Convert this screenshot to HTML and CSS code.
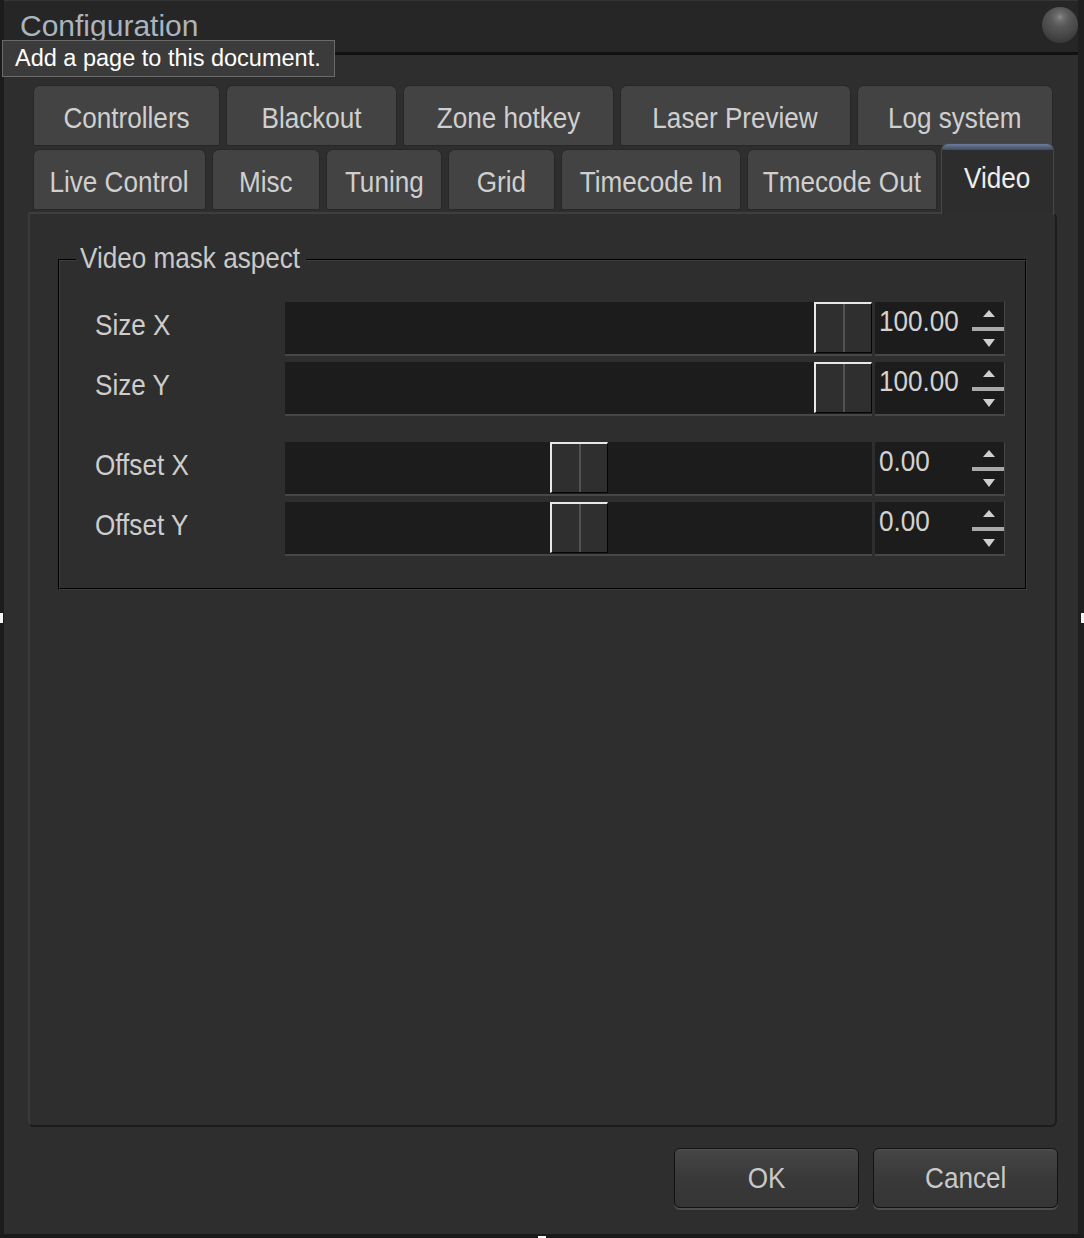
FILE: index.html
```html
<!DOCTYPE html>
<html>
<head>
<meta charset="utf-8">
<title>Configuration</title>
<link rel="stylesheet" href="styles.css">
</head>
<body>
<div class="window">
  <div class="titlebar">
    <span class="title">Configuration</span>
    <span class="knob"></span>
  </div>
  <div class="tooltip">Add a page to this document.</div>

  <div class="tabs">
    <div class="tabrow row1">
      <div class="tab"><span class="t">Controllers</span></div>
      <div class="tab"><span class="t">Blackout</span></div>
      <div class="tab"><span class="t">Zone hotkey</span></div>
      <div class="tab"><span class="t">Laser Preview</span></div>
      <div class="tab"><span class="t">Log system</span></div>
    </div>
    <div class="tabrow row2">
      <div class="tab"><span class="t">Live Control</span></div>
      <div class="tab"><span class="t">Misc</span></div>
      <div class="tab"><span class="t">Tuning</span></div>
      <div class="tab"><span class="t">Grid</span></div>
      <div class="tab"><span class="t">Timecode In</span></div>
      <div class="tab"><span class="t">Tmecode Out</span></div>
      <div class="tab active"><span class="t">Video</span></div>
    </div>
  </div>

  <div class="pane">
    <fieldset class="group">
      <legend><span class="t">Video mask aspect</span></legend>
      <div class="ctl">
        <span class="lbl"><span class="t">Size X</span></span>
        <div class="slider"><span class="thumb" style="--pos:1"></span></div>
        <div class="spin"><span class="val"><span class="t">100.00</span></span>
          <svg class="arrows" width="33" height="52" viewBox="0 0 33 52"><path d="M12 15h12l-6-7z" fill="#cfcfcf"/><rect x="1" y="25" width="32" height="4" fill="#a9a9a9"/><path d="M12 37h12l-6 8z" fill="#cfcfcf"/></svg>
        </div>
      </div>
      <div class="ctl">
        <span class="lbl"><span class="t">Size Y</span></span>
        <div class="slider"><span class="thumb" style="--pos:1"></span></div>
        <div class="spin"><span class="val"><span class="t">100.00</span></span>
          <svg class="arrows" width="33" height="52" viewBox="0 0 33 52"><path d="M12 15h12l-6-7z" fill="#cfcfcf"/><rect x="1" y="25" width="32" height="4" fill="#a9a9a9"/><path d="M12 37h12l-6 8z" fill="#cfcfcf"/></svg>
        </div>
      </div>
      <div class="ctl sep">
        <span class="lbl"><span class="t">Offset X</span></span>
        <div class="slider"><span class="thumb" style="--pos:0.5"></span></div>
        <div class="spin"><span class="val"><span class="t">0.00</span></span>
          <svg class="arrows" width="33" height="52" viewBox="0 0 33 52"><path d="M12 15h12l-6-7z" fill="#cfcfcf"/><rect x="1" y="25" width="32" height="4" fill="#a9a9a9"/><path d="M12 37h12l-6 8z" fill="#cfcfcf"/></svg>
        </div>
      </div>
      <div class="ctl">
        <span class="lbl"><span class="t">Offset Y</span></span>
        <div class="slider"><span class="thumb" style="--pos:0.5"></span></div>
        <div class="spin"><span class="val"><span class="t">0.00</span></span>
          <svg class="arrows" width="33" height="52" viewBox="0 0 33 52"><path d="M12 15h12l-6-7z" fill="#cfcfcf"/><rect x="1" y="25" width="32" height="4" fill="#a9a9a9"/><path d="M12 37h12l-6 8z" fill="#cfcfcf"/></svg>
        </div>
      </div>
    </fieldset>
  </div>

  <div class="buttons">
    <button class="btn"><span class="t">OK</span></button>
    <button class="btn"><span class="t">Cancel</span></button>
  </div>

  <span class="grip grip-l"></span>
  <span class="grip grip-r"></span>
  <span class="grip grip-b"></span>
</div>
</body>
</html>
```

FILE: styles.css
```css
* { box-sizing: border-box; }
html, body { margin: 0; padding: 0; background: #2e2e2e; }
body { width: 1084px; height: 1238px; overflow: hidden; }

.window {
  position: relative;
  width: 1084px;
  height: 1238px;
  background: #2e2e2e;
  border-left: 4px solid #1c1c1c;
  border-right: 6px solid #1f1f1f;
  border-bottom: 4px solid #1a1a1a;
  display: flex;
  flex-direction: column;
  font-family: "Liberation Sans", Arial, sans-serif;
  color: #cecece;
}

/* condensed UI text */
.t {
  display: inline-block;
  transform: scaleX(0.87);
  white-space: nowrap;
}

/* title bar */
.titlebar {
  flex: none;
  height: 55px;
  display: flex;
  align-items: flex-start;
  background: #262626;
  border-top: 1px solid #353535;
  border-bottom: 3px solid #121212;
}
.title {
  font-size: 30px;
  line-height: 34px;
  color: #aab4be;
  padding: 8px 0 0 16px;
}
.knob {
  margin: 6px 0 0 auto;
  width: 36px;
  height: 36px;
  border-radius: 50%;
  background: radial-gradient(circle at 50% 28%, #8a8a8a 0, #6e6e6e 12%, #585858 30%, #4a4a4a 55%, #3b3b3b 78%, #2c2c2c 100%);
}

.tooltip {
  position: absolute;
  left: -2px;
  top: 40px;
  width: 333px;
  height: 37px;
  z-index: 5;
  background: #3b3b3b;
  border: 1px solid #6a6a6a;
  font-size: 23.5px;
  line-height: 35px;
  color: #ffffff;
  padding-left: 12px;
  white-space: nowrap;
}

/* tabs */
.tabs { flex: none; padding-top: 30px; }
.tabrow { display: flex; gap: 6px; padding-left: 29px; }
.tab {
  flex: none;
  display: flex;
  align-items: center;
  justify-content: center;
  height: 61px;
  padding-top: 5px;
  background: #434343;
  border: 1px solid #272727;
  border-radius: 7px 7px 2px 2px;
  font-size: 30px;
  color: #cfcfcf;
  white-space: nowrap;
}
.row2 { height: 71px; align-items: flex-end; margin-top: -3px; }
.row2 .tab { margin-bottom: 4px; }
.row2 .tab.active {
  position: relative;
  z-index: 2;
  height: 71px;
  margin-bottom: 0;
  margin-left: -2px;
  padding: 0 0 3px 0;
  border: 1px solid #484848;
  border-bottom: none;
  border-radius: 7px 7px 0 0;
  background: linear-gradient(#6d7c9c, #404a62) 0 0 / 100% 6px no-repeat, #2d2d2d;
  color: #ededed;
}

.row1 .tab:nth-child(1) { width: 187px; }
.row1 .tab:nth-child(2) { width: 171px; }
.row1 .tab:nth-child(3) { width: 211px; }
.row1 .tab:nth-child(4) { width: 231px; }
.row1 .tab:nth-child(5) { width: 196px; }

.row2 .tab:nth-child(1) { width: 173px; }
.row2 .tab:nth-child(2) { width: 108px; }
.row2 .tab:nth-child(3) { width: 116px; }
.row2 .tab:nth-child(4) { width: 107px; }
.row2 .tab:nth-child(5) { width: 180px; }
.row2 .tab:nth-child(6) { width: 190px; }
.row2 .tab:nth-child(7) { width: 113px; }

/* pane */
.pane {
  flex: none;
  margin: -2px 0 0 24px;
  width: 1029px;
  height: 915px;
  border: 2px solid;
  border-color: #3e3e3e #1d1d1d #1b1b1b #3a3a3a;
  border-radius: 0 6px 6px 6px;
  padding-top: 29px;
}

.group {
  margin: 0 0 0 28px;
  width: 969px;
  padding: 0 0 32px 0;
  border: 2px groove #3d3d3d;
  min-inline-size: auto;
}
.group legend {
  margin-left: 16px;
  padding: 0 4px 4px 4px;
  font-size: 30px;
  line-height: 30px;
  color: #c9c9c9;
}
.group legend .t {
  transform-origin: 0 50%;
  margin-right: -31px;
}

.ctl {
  display: grid;
  grid-template-columns: 187px 587px 130px;
  column-gap: 3px;
  height: 54px;
  margin-left: 35px;
  margin-top: 6px;
}
.ctl:first-of-type { margin-top: 25px; }
.ctl.sep { margin-top: 26px; }

.lbl {
  font-size: 30px;
  line-height: 46px;
  color: #cdcdcd;
}
.lbl .t, .val .t { transform-origin: 0 50%; }

.slider {
  position: relative;
  height: 54px;
  background: #1c1c1c;
  border-bottom: 2px solid #474747;
}
.thumb {
  position: absolute;
  top: 0;
  left: calc(var(--pos) * (100% - 58px));
  width: 58px;
  height: 51px;
  background: #2f2f2f;
  border-top: 2px solid #e8e8e8;
  border-left: 2px solid #e8e8e8;
  border-right: 1px solid #050505;
  border-bottom: 1px solid #050505;
}
.thumb::after {
  content: "";
  position: absolute;
  left: 27px;
  top: 0;
  bottom: 0;
  width: 2px;
  background: #525252;
}

.spin {
  display: flex;
  height: 54px;
  background: #1c1c1c;
  border-right: 1px solid #454545;
  border-bottom: 2px solid #474747;
}
.val {
  flex: 1;
  font-size: 30px;
  line-height: 30px;
  padding: 4px 0 0 4px;
  color: #d2d2d2;
}
.arrows { flex: none; display: block; }

/* buttons */
.buttons {
  flex: none;
  display: flex;
  justify-content: flex-end;
  gap: 14px;
  margin-top: 21px;
  padding-right: 20px;
}
.btn {
  width: 185px;
  height: 60px;
  padding: 0;
  font-family: "Liberation Sans", Arial, sans-serif;
  font-size: 30px;
  color: #c9c9c9;
  background: linear-gradient(#464646, #393939 50%, #353535);
  border: 1px solid #121212;
  border-radius: 6px;
  box-shadow: inset 0 1px 0 #525252, 0 2px 0 #4d4d4d;
}

/* resize grips */
.grip { position: absolute; background: #f4f4f4; }
.grip-l { left: -4px; top: 613px; width: 3px; height: 10px; }
.grip-r { right: -6px; top: 613px; width: 3px; height: 10px; }
.grip-b { left: 534px; bottom: -4px; width: 8px; height: 2px; }
```
